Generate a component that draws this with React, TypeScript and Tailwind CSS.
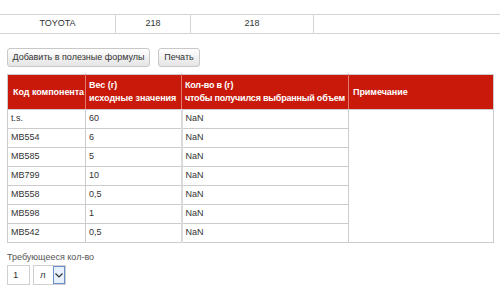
import React from "react";

const rows: [string, string, string][] = [
  ["t.s.", "60", "NaN"],
  ["MB554", "6", "NaN"],
  ["MB585", "5", "NaN"],
  ["MB799", "10", "NaN"],
  ["MB558", "0,5", "NaN"],
  ["MB598", "1", "NaN"],
  ["MB542", "0,5", "NaN"],
];

export default function App() {
  return (
    <div
      className="w-[500px] h-[293px] overflow-hidden bg-white text-[9px] text-[#333]"
      style={{ fontFamily: '"Liberation Sans", Arial, sans-serif' }}
    >
      {/* summary row */}
      <div className="pt-[14px]">
        <div className="flex h-[20px] border-y border-[#d4d4d4] items-center">
          <div className="w-[116px] h-full flex items-center justify-center border-r border-[#d4d4d4]">TOYOTA</div>
          <div className="w-[75px] h-full flex items-center justify-center border-r border-[#d4d4d4]">218</div>
          <div className="w-[123px] h-full flex items-center justify-center border-r border-[#d4d4d4]">218</div>
          <div className="flex-1" />
        </div>
      </div>

      {/* actions */}
      <div className="flex gap-[8px] pl-[7px] mt-[14px]">
        <button className="h-[19px] w-[143px] rounded-[3px] border border-[#c8c8c8] bg-gradient-to-b from-white to-[#e4e4e4] text-[9px] text-[#333]">
          Добавить в полезные формулы
        </button>
        <button className="h-[19px] w-[42px] rounded-[3px] border border-[#c8c8c8] bg-gradient-to-b from-white to-[#e4e4e4] text-[9px] text-[#333]">
          Печать
        </button>
      </div>

      {/* components table */}
      <table className="ml-[7px] mt-[7px] w-[486px] border-collapse table-fixed">
        <colgroup>
          <col className="w-[78px]" />
          <col className="w-[96px]" />
          <col className="w-[167px]" />
          <col className="w-[145px]" />
        </colgroup>
        <thead>
          <tr className="h-[35px] bg-[#c8190b] text-white text-left text-[9px] leading-[13px] tracking-[-0.05px]">
            <th className="border border-[#cccccc] border-r-[#e07a70] px-[5px] font-bold whitespace-nowrap">Код компонента</th>
            <th className="border border-[#cccccc] border-r-[#e07a70] px-[3px] font-bold whitespace-nowrap">
              Вес (г)
              <br />
              исходные значения
            </th>
            <th className="border border-[#cccccc] border-r-[#e07a70] px-[3px] font-bold whitespace-nowrap tracking-[-0.2px]">
              Кол-во в (г)
              <br />
              чтобы получился выбранный объем
            </th>
            <th className="border border-[#cccccc] px-[4px] font-bold">Примечание</th>
          </tr>
        </thead>
        <tbody>
          {rows.map((r, i) => (
            <tr key={r[0]} className="h-[19px]">
              <td className="border border-[#cccccc] px-[3px]">{r[0]}</td>
              <td className="border border-[#cccccc] px-[3px]">{r[1]}</td>
              <td className="border border-[#cccccc] border-l-[2px] border-l-[#dadada] px-[3px]">{r[2]}</td>
              {i === 0 && <td rowSpan={7} className="border border-[#cccccc]" />}
            </tr>
          ))}
        </tbody>
      </table>

      {/* required amount */}
      <div className="pl-[7px] mt-[8px]">
        <div className="leading-[12px] text-[#555] text-[9px]">Требующееся кол-во</div>
        <div className="flex gap-[3px] mt-[2px]">
          <div className="w-[23px] h-[20px] border border-[#d0d0d0] flex items-center pl-[5px] text-[9.5px]">1</div>
          <div className="w-[33px] h-[20px] border border-[#d0d0d0] flex items-center justify-between pl-[6px] text-[9.5px]">
            <span>л</span>
            <span className="w-[12px] h-[18px] border border-[#6a8fc8] bg-[#e8f0fb] flex items-center justify-center">
              <svg width="8" height="5" viewBox="0 0 8 5">
                <path d="M0.5 0.5 L4 4 L7.5 0.5" fill="none" stroke="#333" strokeWidth="1.2" />
              </svg>
            </span>
          </div>
        </div>
      </div>
    </div>
  );
}
